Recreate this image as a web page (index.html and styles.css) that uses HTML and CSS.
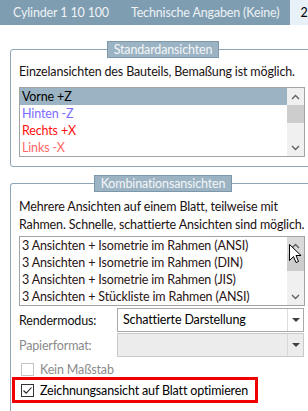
FILE: index.html
```html
<!DOCTYPE html>
<html lang="de">
<head>
    <meta charset="UTF-8">
    <title>2D</title>
    <link rel="stylesheet" href="styles.css">
</head>
<body>
    <div class="window">
        <div class="tabs">
            <span class="tab">Cylinder 1 10 100</span>
            <span class="tab">Technische Angaben (Keine)</span>
            <span class="tab active">2D</span>
        </div>

        <div class="panel">
            <!-- Standardansichten -->
            <section class="group group-std">
                <div class="group-title">Standardansichten</div>
                <p class="desc">Einzelansichten des Bauteils, Bemaßung ist möglich.</p>
                <div class="list">
                    <ul class="items">
                        <li class="selected">Vorne +Z</li>
                        <li class="c-blue">Hinten -Z</li>
                        <li class="c-red">Rechts +X</li>
                        <li class="c-pink">Links -X</li>
                    </ul>
                    <div class="scrollbar">
                        <div class="sb-btn"><svg width="9" height="6" viewBox="0 0 9 6"><path d="M1 5 L4.5 1.5 L8 5" fill="none" stroke="#606060" stroke-width="1.4"/></svg></div>
                        <div class="sb-track"><div class="sb-thumb"></div></div>
                        <div class="sb-btn"><svg width="9" height="6" viewBox="0 0 9 6"><path d="M1 1 L4.5 4.5 L8 1" fill="none" stroke="#606060" stroke-width="1.4"/></svg></div>
                    </div>
                </div>
            </section>

            <!-- Kombinationsansichten -->
            <section class="group group-combo">
                <div class="group-title">Kombinationsansichten</div>
                <p class="desc">Mehrere Ansichten auf einem Blatt, teilweise mit<br>Rahmen. Schnelle, schattierte Ansichten sind möglich.</p>
                <div class="list list-combo">
                    <ul class="items">
                        <li>3 Ansichten + Isometrie im Rahmen (ANSI)</li>
                        <li>3 Ansichten + Isometrie im Rahmen (DIN)</li>
                        <li>3 Ansichten + Isometrie im Rahmen (JIS)</li>
                        <li>3 Ansichten + Stückliste im Rahmen (ANSI)</li>
                    </ul>
                    <div class="scrollbar">
                        <div class="sb-btn hover"><svg width="9" height="6" viewBox="0 0 9 6"><path d="M1 5 L4.5 1.5 L8 5" fill="none" stroke="#606060" stroke-width="1.4"/></svg></div>
                        <div class="sb-track"><div class="sb-thumb"></div></div>
                        <div class="sb-btn"><svg width="9" height="6" viewBox="0 0 9 6"><path d="M1 1 L4.5 4.5 L8 1" fill="none" stroke="#606060" stroke-width="1.4"/></svg></div>
                    </div>
                    <svg class="cursor" width="13" height="20" viewBox="0 0 13 20">
                        <path d="M0.5 0.5 L0.5 16.5 L4.5 12.5 L7 18.5 L9.5 17.5 L7 11.5 L12 11.5 Z" fill="#fff" stroke="#000" stroke-width="1" stroke-linejoin="miter"/>
                    </svg>
                </div>

                <div class="form-row first">
                    <span class="label">Rendermodus:</span>
                    <div class="combo">
                        <span class="combo-value">Schattierte Darstellung</span>
                        <span class="combo-arrow"><svg width="8" height="4" viewBox="0 0 8 4"><path d="M0 0 H8 L4 4 Z" fill="#404040"/></svg></span>
                    </div>
                </div>
                <div class="form-row">
                    <span class="label disabled">Papierformat:</span>
                    <div class="combo disabled">
                        <span class="combo-value"></span>
                        <span class="combo-arrow"><svg width="8" height="4" viewBox="0 0 8 4"><path d="M0 0 H8 L4 4 Z" fill="#404040"/></svg></span>
                    </div>
                </div>

                <div class="check disabled">
                    <span class="box"></span>
                    <span>Kein Maßstab</span>
                </div>
                <div class="highlight">
                    <div class="check">
                        <span class="box"><svg width="11" height="11" viewBox="0 0 11 11"><path d="M1.5 5.5 L4.2 8.2 L9.5 2.5" fill="none" stroke="#222" stroke-width="1.1"/></svg></span>
                        <span>Zeichnungsansicht auf Blatt optimieren</span>
                    </div>
                </div>
            </section>
        </div>
    </div>
</body>
</html>
```

FILE: styles.css
```css
* {
    margin: 0;
    padding: 0;
    box-sizing: border-box;
}
body {
    width: 308px;
    height: 411px;
    overflow: hidden;
    background-color: #fff;
    font-family: Lato, "Open Sans", sans-serif;
    font-size: 12.5px;
    letter-spacing: -0.15px;
    color: #1a1212;
}
.window {
    width: 330px;
}
.tabs {
    display: flex;
    height: 25px;
    background-color: #7f9db1;
}
.tab {
    line-height: 25px;
    padding: 0 11px;
    color: #eef2f5;
    white-space: nowrap;
}
.tab:first-child {
    padding-left: 13px;
}
.tab.active {
    background-color: #e8f1f8;
    color: #000;
    padding-left: 10px;
}
.panel {
    padding-top: 24px;
}
.group {
    margin-left: 10px;
    width: 306px;
    border: 1px solid #8ea6b7;
    border-radius: 3px;
    padding: 0 0 0 8px;
}
.group-std {
    padding-bottom: 9px;
}
.group-combo {
    margin-top: 16px;
    height: 260px;
    border-bottom: none;
}
.group-title {
    width: fit-content;
    height: 17px;
    line-height: 15px;
    margin: -9px auto 0;
    padding: 0 6px;
    position: relative;
    left: -4px;
    background-color: #9cb3c3;
    border: 1px solid #7d98ab;
    color: #f3f6f8;
}
.desc {
    line-height: 18px;
    margin-top: 5px;
    white-space: nowrap;
}
.group-combo .desc {
    margin-top: 6px;
}
.list {
    display: flex;
    margin-top: 6px;
    width: 286px;
    height: 70px;
    border: 1px solid #a3a3a3;
    background-color: #fff;
}
.list-combo {
    margin-top: 2px;
    position: relative;
}
.items {
    list-style: none;
    flex: 1;
}
.items li {
    height: 17px;
    line-height: 17px;
    padding-left: 2px;
    white-space: nowrap;
}
.items li.selected {
    background-color: #9cb3c3;
    color: #000;
}
.list-combo .items li {
    color: #2a1414;
}
.c-blue {
    color: #7b6cff;
}
.c-red {
    color: #ff1010;
}
.c-pink {
    color: #ff6767;
}
.scrollbar {
    width: 17px;
    display: flex;
    flex-direction: column;
    background-color: #f0f0f0;
}
.sb-btn {
    height: 17px;
    display: flex;
    align-items: center;
    justify-content: center;
}
.sb-btn.hover {
    background-color: #dadada;
}
.sb-track {
    flex: 1;
}
.sb-thumb {
    height: 18px;
    background-color: #cdcdcd;
}
.list-combo .sb-thumb {
    height: 17px;
}
.cursor {
    position: absolute;
    left: 269px;
    top: 7px;
}
.form-row {
    display: flex;
    align-items: center;
    height: 24px;
    margin-top: 1px;
}
.form-row.first {
    margin-top: 2px;
}
.label {
    width: 98px;
    color: #111;
}
.label.disabled {
    color: #8a8a8a;
}
.combo {
    display: flex;
    width: 187px;
    height: 24px;
    border: 1px solid #a9a9a9;
    background-color: #fff;
}
.combo.disabled {
    background-color: #ececec;
    border-color: #c9c9c9;
}
.combo-value {
    flex: 1;
    line-height: 22px;
    padding-left: 5px;
    color: #000;
}
.combo-arrow {
    width: 16px;
    border-left: 1px solid #dcdcdc;
    display: flex;
    align-items: center;
    justify-content: center;
}
.combo.disabled .combo-arrow {
    border-left-color: #d8d8d8;
}
.check {
    display: flex;
    align-items: center;
    gap: 6px;
    height: 15px;
    margin-top: 5px;
    padding-left: 2px;
}
.check .box {
    width: 13px;
    height: 13px;
    border: 1px solid #333;
    background-color: #fff;
    display: flex;
    align-items: center;
    justify-content: center;
}
.check.disabled {
    color: #8a8a8a;
}
.check.disabled .box {
    border-color: #c4c4c4;
}
.highlight {
    width: 246px;
    height: 26px;
    margin-left: -7px;
    border: 3px solid #f00000;
    padding-left: 6px;
    display: flex;
    align-items: center;
}
.highlight .check {
    margin-top: 0;
    padding-left: 0;
    color: #000;
}
```
